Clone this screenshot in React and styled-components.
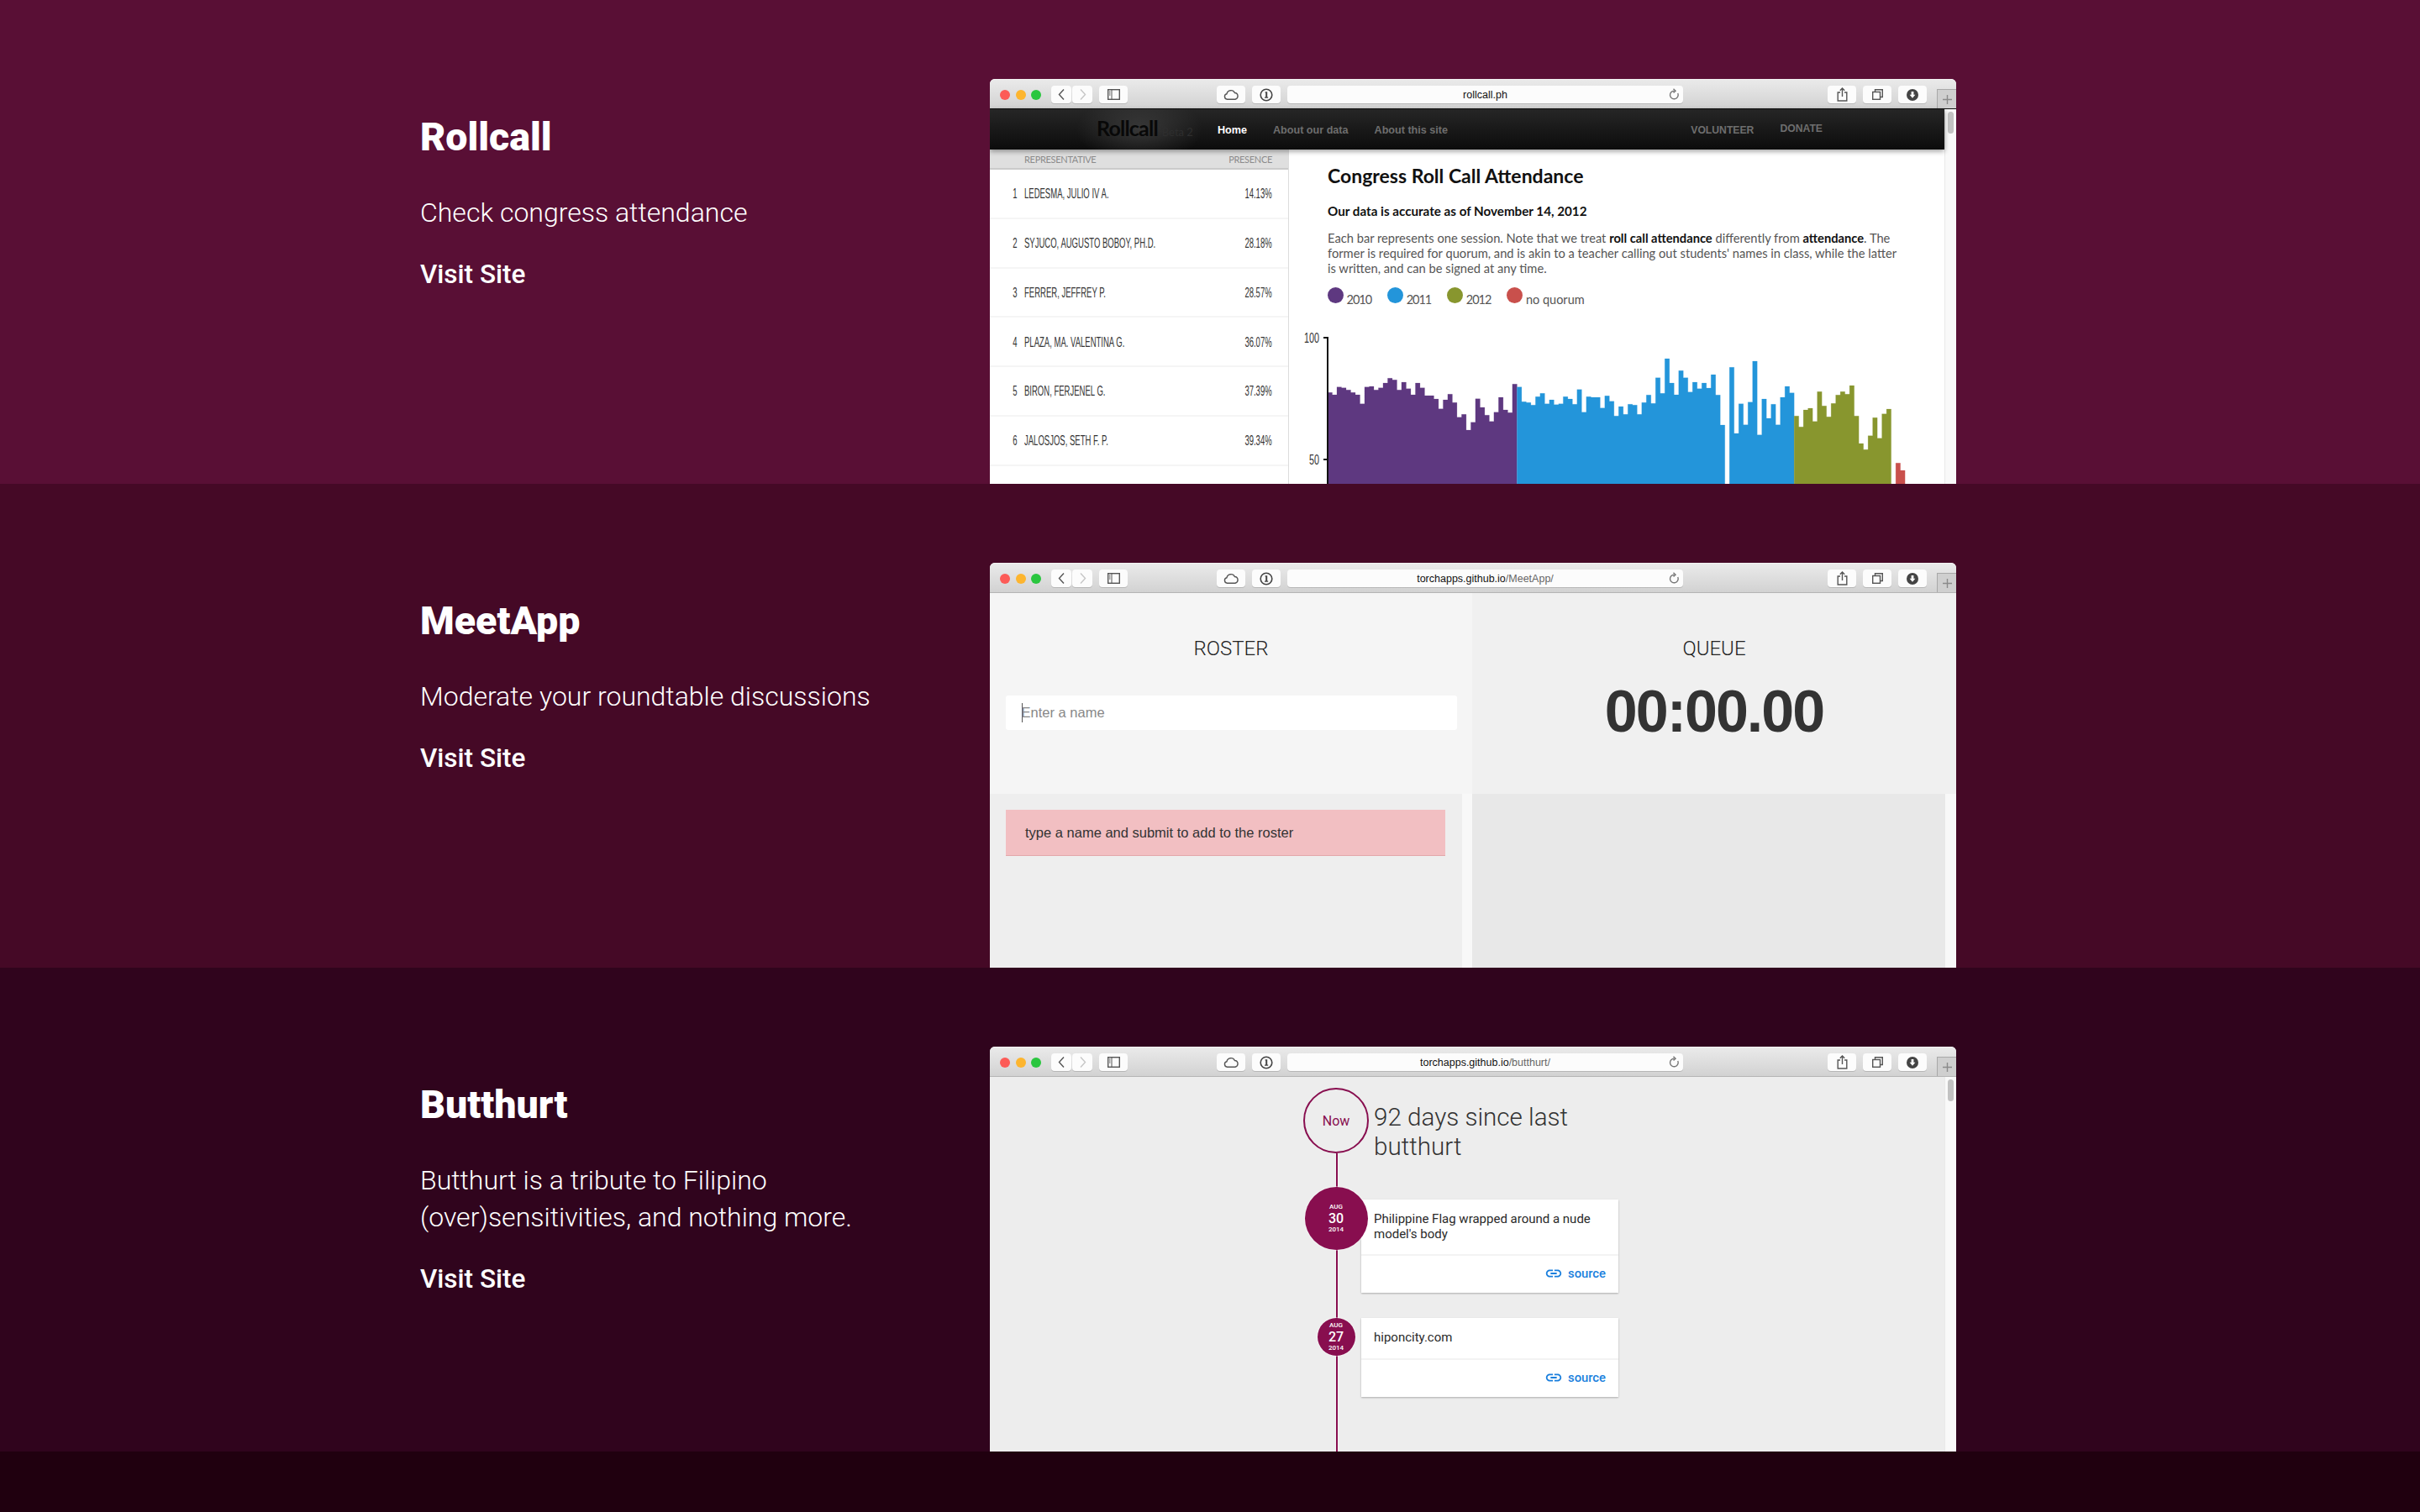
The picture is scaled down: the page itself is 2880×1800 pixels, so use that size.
import styled, { createGlobalStyle } from 'styled-components';
import { MdLink } from 'react-icons/md';

const GlobalStyle = createGlobalStyle`
html, body {
  margin: 0;
  padding: 0;
  background: #20000f;
  font-family: Roboto, "Liberation Sans", sans-serif;
}
* { box-sizing: border-box; }
`

const Page = styled.div`
width: 2880px;
display: flex;
flex-direction: column;
`
const Section = styled.section`
height: 576px;
padding: 94px 0 0 500px;
display: flex;
overflow: hidden;
background: ${p => p.$bg};
`
const Footer = styled.footer`
height: 72px;
background: #20000f;
`
const Info = styled.div`
width: 678px;
padding-top: 41px;
padding-right: 74px;
color: #fff;
`
const Title = styled.h2`
margin: 0;
font-size: 46.5px;
line-height: 56px;
font-weight: 900;
`
const Desc = styled.p`
margin: 40px 0 0;
font-size: 32px;
line-height: 44px;
font-weight: 300;
`
const Visit = styled.a`
display: block;
margin-top: 30px;
font-size: 31.5px;
line-height: 44px;
font-weight: 500;
`

/* safari window */
const Win = styled.div`
width: 1150px;
height: 482px;
border-radius: 6px 6px 0 0;
overflow: hidden;
display: flex;
flex-direction: column;
background: #fff;
`
const Toolbar = styled.div`
height: 36px;
flex: none;
display: flex;
padding: 7px 0 0 12px;
background: linear-gradient(#eaeaea, #d2d2d2);
border-top: 1px solid #f2f2f2;
border-bottom: 1px solid ${p => p.$dark ? '#111' : '#b4b4b4'};
`
const Lights = styled.div`
display: flex;
gap: 6.5px;
height: 21px;
align-items: center;
margin-right: 12px;
`
const Light = styled.span`
width: 12px;
height: 12px;
border-radius: 50%;
background: ${p => p.$c};
`
const TBtn = styled.div`
width: ${p => p.$w || 34}px;
height: 21px;
margin-right: ${p => p.$mr ?? 8}px;
flex: none;
border-radius: 4px;
background: #fcfcfc;
box-shadow: 0 1px 0 rgba(0,0,0,.14);
display: flex;
align-items: center;
justify-content: center;
`
const UrlBar = styled(TBtn)`
width: 471px;
margin-right: 172px;
position: relative;
font: 12.5px "Liberation Sans", sans-serif;
color: #111;
`
const UrlPath = styled.span`
color: #666;
`
const Reload = styled.span`
position: absolute;
right: 5px;
top: 3px;
display: flex;
`
const NewTab = styled.div`
margin-left: 4px;
width: 23px;
height: 23px;
align-self: flex-end;
margin-top: auto;
border: 1px solid #a8a8a8;
border-right: 0;
border-bottom: 0;
background: #cfcfcf;
display: flex;
align-items: center;
justify-content: center;
`
const Ico = styled.svg`
fill: none;
stroke: ${p => p.$c || '#555'};
stroke-width: 1.4;
display: block;
`

const Scrollbar = styled.div`
width: 14px;
flex: none;
background: #f9f9f9;
border-left: 1px solid #e9e9e9;
padding: 3px 0 0 3px;
`
const Thumb = styled.div`
width: 7px;
height: 26px;
border-radius: 4px;
background: ${p => p.$c || '#c2c2c2'};
`
const Body = styled.div`
flex: 1;
display: flex;
min-height: 0;
`
const Main = styled.div`
flex: 1;
display: flex;
flex-direction: column;
min-width: 0;
`

/* rollcall */
const Nav = styled.nav`
height: 48px;
flex: none;
display: flex;
align-items: center;
padding: 0 145px 0 127px;
position: relative;
z-index: 1;
box-shadow: 0 2px 6px rgba(0,0,0,.4);
background:
  radial-gradient(ellipse 75px 40px at 178px 24px, rgba(80,80,80,.55), transparent),
  linear-gradient(#262626, #0c0c0c);
font: bold 13px "Liberation Sans", sans-serif;
`
const Logo = styled.div`
width: 144px;
display: flex;
align-items: baseline;
gap: 5px;
font: bold 25px Lato, sans-serif;
letter-spacing: -.8px;
color: #080808;
margin-top: -5px;
`
const Beta = styled.span`
font-size: 13px;
letter-spacing: 0;
font-weight: 400;
color: #2e2e2e;
`
const NavLink = styled.a`
margin-right: 31px;
padding-top: ${p => p.$up ? 0 : 2}px;
padding-bottom: ${p => p.$up ? 2 : 0}px;
color: ${p => p.$on ? '#fff' : '#6e6e6e'};
font-size: ${p => p.$caps ? 12.2 : 12.6}px;
&:last-child { margin-right: 0; }
`
const Spacer = styled.div`
flex: 1;
`
const Columns = styled.div`
flex: 1;
display: flex;
min-height: 0;
`
const ListPanel = styled.div`
width: 356px;
flex: none;
border-right: 1px solid #dcdcdc;
background: #fff;
`
const ListHead = styled.div`
height: 24px;
padding: 0 19px 0 41px;
display: flex;
align-items: center;
justify-content: space-between;
background: #dfdfdf;
border-bottom: 2px solid #cbcbcb;
font: 11px Lato, sans-serif;
letter-spacing: -.3px;
color: #8b8b8b;
`
const ListRow = styled.div`
height: 58.75px;
padding: 2px 19px 0 12px;
display: flex;
align-items: center;
border-bottom: 2px solid #f5f5f5;
font: 17px "Liberation Sans", sans-serif;
color: #333;
`
const Num = styled.span`
width: 20px;
flex: none;
display: flex;
justify-content: flex-end;
margin-right: 9px;
`
const Squeeze = styled.span`
display: inline-block;
flex: none;
white-space: nowrap;
transform: scaleX(.56);
transform-origin: ${p => p.$right ? 'right' : 'left'} center;
`
const Name = styled(Squeeze)`
flex: 1 1 0;
width: 0;
`
const Content = styled.div`
flex: 1;
padding: 17px 0 0 46px;
color: #555;
font-family: Lato, sans-serif;
overflow: hidden;
`
const H3 = styled.h3`
margin: 0;
font-size: 23px;
line-height: 28px;
font-weight: 700;
color: #111;
`
const Sub = styled.h4`
margin: 18px 0 0;
font-size: 15.2px;
line-height: 20px;
font-weight: 700;
color: #111;
`
const Para = styled.p`
margin: 13px 0 0;
font-size: 14.7px;
line-height: 18px;
white-space: nowrap;
b { color: #111; }
`
const Legend = styled.div`
margin-top: 14px;
display: flex;
gap: 19px;
font-size: 14.5px;
line-height: 19px;
`
const LegendItem = styled.div`
display: flex;
gap: 3.5px;
`
const Dot = styled.span`
width: 19px;
height: 19px;
border-radius: 50%;
background: ${p => p.$c};
`
const LegendText = styled.span`
padding-top: 5px;
letter-spacing: ${p => p.$tight ? '-1px' : '0'};
`
const ChartSvg = styled.svg`
display: block;
margin: 29px 0 0 -40px;
`
const AxisLabel = styled.text`
font: 16px "Liberation Sans", sans-serif;
fill: #333;
`

/* meetapp */
const MeetGrid = styled.div`
flex: 1;
display: grid;
grid-template-columns: 574px 576px;
grid-template-rows: 239px 1fr;
min-height: 0;
font-family: "Liberation Sans", sans-serif;
`
const MeetHead = styled.div`
background: ${p => p.$bg};
padding-top: 48px;
display: flex;
flex-direction: column;
align-items: center;
`
const MeetTitle = styled.h3`
margin: 0;
font: 300 24px/36px Roboto, sans-serif;
color: #222;
`
const InputBox = styled.div`
margin-top: 38px;
width: 537px;
height: 41px;
border-radius: 3px;
background: #fff;
display: flex;
align-items: center;
padding-left: 19px;
font-size: 16.5px;
color: #888;
`
const Caret = styled.span`
width: 1px;
height: 23px;
background: #555;
margin-right: -1px;
`
const Timer = styled.div`
margin-top: 21px;
font: bold 70px/72px "Liberation Sans", sans-serif;
letter-spacing: -2px;
color: #333;
`
const MeetCol = styled.div`
background: #f8f8f8;
padding-right: ${p => p.$pr}px;
display: flex;
`
const MeetPane = styled.div`
flex: 1;
background: ${p => p.$bg};
padding: 19px 20px 0 19px;
`
const Alert = styled.div`
height: 55px;
padding-left: 23px;
display: flex;
align-items: center;
background: #f2bfc2;
border-bottom: 1px solid #e3a7aa;
font-size: 16.5px;
color: #333;
`

/* butthurt */
const HurtBody = styled.div`
flex: 1;
background: #ededed;
position: relative;
padding: 13px 0 0 373px;
min-width: 0;
`
const Line = styled.div`
position: absolute;
left: 412px;
top: 91px;
bottom: 0;
width: 2px;
background: #880e4f;
box-shadow: 0 0 0 1px rgba(255,255,255,.35);
`
const Entry = styled.div`
display: flex;
position: relative;
margin-top: ${p => p.$mt || 0}px;
`
const BadgeCol = styled.div`
width: 78px;
flex: none;
display: flex;
justify-content: center;
position: relative;
z-index: 1;
`
const NowBadge = styled.div`
width: 78px;
height: 78px;
border-radius: 50%;
border: 2px solid #880e4f;
background: #ededed;
display: flex;
align-items: center;
justify-content: center;
font-size: 16px;
color: #880e4f;
`
const DateBadge = styled.div`
width: ${p => p.$size}px;
height: ${p => p.$size}px;
border-radius: 50%;
background: #880e4f;
box-shadow: 0 0 0 1px rgba(255,255,255,.4);
color: #fff;
display: flex;
flex-direction: column;
align-items: center;
justify-content: center;
font: 500 8px/12px Roboto, sans-serif;
`
const Day = styled.span`
font-size: 16px;
line-height: 15px;
font-weight: 500;
`
const Headline = styled.h3`
margin: 18px 0 0 6px;
width: 240px;
font-size: 29.6px;
line-height: 35px;
font-weight: 300;
color: #333;
`
const Card = styled.div`
width: 306px;
margin: ${p => p.$mt || 0}px 0 0 -9px;
background: #fff;
box-shadow: 0 1px 2px rgba(0,0,0,.28);
`
const CardText = styled.div`
padding: 15px 15px 15px 15px;
font-size: 15px;
line-height: 17.5px;
color: #2a2a2a;
`
const CardFoot = styled.div`
height: 46px;
border-top: 2px solid #f3f3f3;
padding: 0 15px 2px 0;
display: flex;
align-items: center;
justify-content: flex-end;
gap: 6px;
font-size: 14.8px;
font-weight: 500;
color: #1a7fdd;
`

const Chevron = ({ left, faint }) => (
  <Ico width="11" height="15" viewBox="0 0 11 15" $c={faint ? '#c6c6c6' : '#555'}>
    <path d={left ? 'M8 1.5 2.5 7.5 8 13.5' : 'M3 1.5 8.5 7.5 3 13.5'} />
  </Ico>
)
const SidebarIcon = () => (
  <Ico width="15" height="13" viewBox="0 0 15 13">
    <rect x=".7" y=".7" width="13.6" height="11.6" />
    <path d="M5 .7v11.6M2 3h1.5M2 5h1.5M2 7h1.5" strokeWidth="1" />
  </Ico>
)
const CloudIcon = () => (
  <Ico width="18" height="13" viewBox="0 0 18 13" strokeWidth="1">
    <path d="M4.5 12.2a3.3 3.3 0 0 1-.5-6.5 5 5 0 0 1 9.4-1.2 3.9 3.9 0 0 1 .6 7.7z" />
  </Ico>
)
const InfoIcon = () => (
  <svg width="16" height="16" viewBox="0 0 16 16">
    <circle cx="8" cy="8" r="6.8" fill="none" stroke="#444" strokeWidth="1.6" />
    <path d="M6.6 4.2h2.6v6.4h1v1.2H6v-1.2h1.2V5.4H6.6z" fill="#444" />
  </svg>
)
const ReloadIcon = () => (
  <Ico width="13" height="15" viewBox="0 0 13 15" $c="#777">
    <path d="M7.5 3.2a4.8 4.8 0 1 0 4.2 2.8" />
    <path d="M6.5 .8 9 3.2 6.5 5.4" />
  </Ico>
)
const ShareIcon = () => (
  <Ico width="13" height="17" viewBox="0 0 13 17">
    <path d="M4 6H1.2v10h10.6V6H9M6.5 11V1.2M3.8 3.8 6.5 1l2.7 2.8" />
  </Ico>
)
const TabsIcon = () => (
  <Ico width="13" height="13" viewBox="0 0 13 13" strokeWidth="1.2">
    <rect x=".7" y="3.5" width="8.8" height="8.8" />
    <path d="M3.5 3.5V.7h8.8v8.8H9.5" />
  </Ico>
)
const DownIcon = () => (
  <svg width="14" height="14" viewBox="0 0 14 14">
    <circle cx="7" cy="7" r="7" fill="#444" />
    <path d="M5.6 3h2.8v3.8h2L7 10.8 3.6 6.8h2z" fill="#fff" />
  </svg>
)
const PlusIcon = () => (
  <Ico width="11" height="11" viewBox="0 0 11 11" $c="#8a8a8a">
    <path d="M5.5 0v11M0 5.5h11" />
  </Ico>
)

function Safari({ host, path, dark, children }) {
  return (
    <Win>
      <Toolbar $dark={dark}>
        <Lights>
          <Light $c="#fc5b57" />
          <Light $c="#fdb52f" />
          <Light $c="#2ac63f" />
        </Lights>
        <TBtn $w={24} $mr={1}><Chevron left /></TBtn>
        <TBtn $w={24}><Chevron faint /></TBtn>
        <TBtn $mr={106}><SidebarIcon /></TBtn>
        <TBtn><CloudIcon /></TBtn>
        <TBtn><InfoIcon /></TBtn>
        <UrlBar>
          <span>{host}<UrlPath>{path}</UrlPath></span>
          <Reload><ReloadIcon /></Reload>
        </UrlBar>
        <TBtn><ShareIcon /></TBtn>
        <TBtn><TabsIcon /></TBtn>
        <TBtn $mr={8}><DownIcon /></TBtn>
        <NewTab><PlusIcon /></NewTab>
      </Toolbar>
      <Body>{children}</Body>
    </Win>
  )
}

const reps = [
  ['LEDESMA, JULIO IV A.', '14.13%'],
  ['SYJUCO, AUGUSTO BOBOY, PH.D.', '28.18%'],
  ['FERRER, JEFFREY P.', '28.57%'],
  ['PLAZA, MA. VALENTINA G.', '36.07%'],
  ['BIRON, FERJENEL G.', '37.39%'],
  ['JALOSJOS, SETH F. P.', '39.34%'],
]

const legend = [
  ['#5e3880', '2010', true],
  ['#2395da', '2011', true],
  ['#88962e', '2012', true],
  ['#c9504c', 'no quorum', false],
]

// bar tops, read off the picture (3 units = 1px, from y=420)
const purple = [142,150,122,125,133,142,150,182,122,120,133,125,108,91,97,133,105,128,150,108,125,153,153,165,200,168,148,178,230,220,276,248,164,195,223,245,212,159,204,214,112]
const blue = [122,175,178,187,157,145,182,168,185,182,157,165,184,131,212,157,159,159,197,154,173,226,192,220,184,187,220,178,151,181,89,145,21,108,150,64,89,140,105,128,108,126,78,151,258,null,52,288,182,257,176,30,293,165,234,184,257,159,120,143]
const olive = [226,265,204,198,245,139,190,229,181,151,139,148,117,226,324,346,296,232,305,218,201]
const red = [394,420]

const BAR = 5.497
const BOTTOM = 181
const series = [
  ['#5e3880', 0, purple],
  ['#2395da', 41, blue],
  ['#88962e', 101, olive],
  ['#c9504c', 123, red],
]

// one outline per colour, so the bars don't show seams
function barPath(start, tops) {
  let d = ''
  let open = false
  tops.forEach((z, i) => {
    const x = 40 + (start + i) * BAR
    if (z === null) {
      if (open) d += `V${BOTTOM}Z`
      open = false
      return
    }
    const y = 25 + z / 3
    d += open ? `V${y}` : `M${x} ${BOTTOM}V${y}`
    d += `H${x + BAR}`
    open = true
  })
  return d + `V${BOTTOM}Z`
}

function Chart() {
  return (
    <ChartSvg width="760" height="181" viewBox="0 0 760 181">
      {series.map(([color, start, tops]) => (
        <path key={color} d={barPath(start, tops)} fill={color} stroke={color} strokeOpacity=".3" strokeWidth=".7" />
      ))}
      <path d="M40 6v175M35 7h5M35 152h5" stroke="#111" strokeWidth="2" fill="none" />
      <AxisLabel x="12" y="12.5" textLength="18" lengthAdjust="spacingAndGlyphs">100</AxisLabel>
      <AxisLabel x="18" y="158" textLength="12" lengthAdjust="spacingAndGlyphs">50</AxisLabel>
    </ChartSvg>
  )
}

function Rollcall() {
  return (
    <Safari host="rollcall.ph" dark>
      <Main>
        <Nav>
          <Logo>Rollcall <Beta>Beta 2</Beta></Logo>
          <NavLink $on>Home</NavLink>
          <NavLink>About our data</NavLink>
          <NavLink>About this site</NavLink>
          <Spacer />
          <NavLink $caps>VOLUNTEER</NavLink>
          <NavLink $caps $up>DONATE</NavLink>
        </Nav>
        <Columns>
          <ListPanel>
            <ListHead><span>REPRESENTATIVE</span><span>PRESENCE</span></ListHead>
            {reps.map(([name, pct], i) => (
              <ListRow key={name}>
                <Num><Squeeze $right>{i + 1}</Squeeze></Num>
                <Name>{name}</Name>
                <Squeeze $right>{pct}</Squeeze>
              </ListRow>
            ))}
          </ListPanel>
          <Content>
            <H3>Congress Roll Call Attendance</H3>
            <Sub>Our data is accurate as of November 14, 2012</Sub>
            <Para>
              Each bar represents one session. Note that we treat <b>roll call attendance</b> differently from <b>attendance</b>. The<br />
              former is required for quorum, and is akin to a teacher calling out students' names in class, while the latter<br />
              is written, and can be signed at any time.
            </Para>
            <Legend>
              {legend.map(([c, label, tight]) => (
                <LegendItem key={label}><Dot $c={c} /><LegendText $tight={tight}>{label}</LegendText></LegendItem>
              ))}
            </Legend>
            <Chart />
          </Content>
        </Columns>
      </Main>
      <Scrollbar><Thumb /></Scrollbar>
    </Safari>
  )
}

function MeetApp() {
  return (
    <Safari host="torchapps.github.io" path="/MeetApp/">
      <MeetGrid>
        <MeetHead $bg="#f5f5f5">
          <MeetTitle>ROSTER</MeetTitle>
          <InputBox><Caret />Enter a name</InputBox>
        </MeetHead>
        <MeetHead $bg="#f0f0f0">
          <MeetTitle>QUEUE</MeetTitle>
          <Timer>00:00.00</Timer>
        </MeetHead>
        <MeetCol $pr={12}>
          <MeetPane $bg="#eeeeee">
            <Alert>type a name and submit to add to the roster</Alert>
          </MeetPane>
        </MeetCol>
        <MeetCol $pr={13}>
          <MeetPane $bg="#e8e8e8" />
        </MeetCol>
      </MeetGrid>
    </Safari>
  )
}

const SourceLink = () => (
  <CardFoot><MdLink size={22} />source</CardFoot>
)

function Butthurt() {
  return (
    <Safari host="torchapps.github.io" path="/butthurt/">
      <HurtBody>
        <Line />
        <Entry>
          <BadgeCol><NowBadge>Now</NowBadge></BadgeCol>
          <Headline>92 days since last butthurt</Headline>
        </Entry>
        <Entry $mt={30}>
          <BadgeCol>
            <DateBadge $size={75}><span>AUG</span><Day>30</Day><span>2014</span></DateBadge>
          </BadgeCol>
          <Card $mt={15}>
            <CardText>Philippine Flag wrapped around a nude model's body</CardText>
            <SourceLink />
          </Card>
        </Entry>
        <Entry $mt={30}>
          <BadgeCol>
            <DateBadge $size={45}><span>AUG</span><Day>27</Day><span>2014</span></DateBadge>
          </BadgeCol>
          <Card>
            <CardText>hiponcity.com</CardText>
            <SourceLink />
          </Card>
        </Entry>
      </HurtBody>
      <Scrollbar><Thumb /></Scrollbar>
    </Safari>
  )
}

const projects = [
  { bg: '#590f35', title: 'Rollcall', desc: 'Check congress attendance', shot: <Rollcall /> },
  { bg: '#450926', title: 'MeetApp', desc: 'Moderate your roundtable discussions', shot: <MeetApp /> },
  { bg: '#30041d', title: 'Butthurt', desc: 'Butthurt is a tribute to Filipino (over)sensitivities, and nothing more.', shot: <Butthurt /> },
]

export default function App() {
  return (
    <Page>
      <GlobalStyle />
      {projects.map(p => (
        <Section key={p.title} $bg={p.bg}>
          <Info>
            <Title>{p.title}</Title>
            <Desc>{p.desc}</Desc>
            <Visit>Visit Site</Visit>
          </Info>
          {p.shot}
        </Section>
      ))}
      <Footer />
    </Page>
  )
}
